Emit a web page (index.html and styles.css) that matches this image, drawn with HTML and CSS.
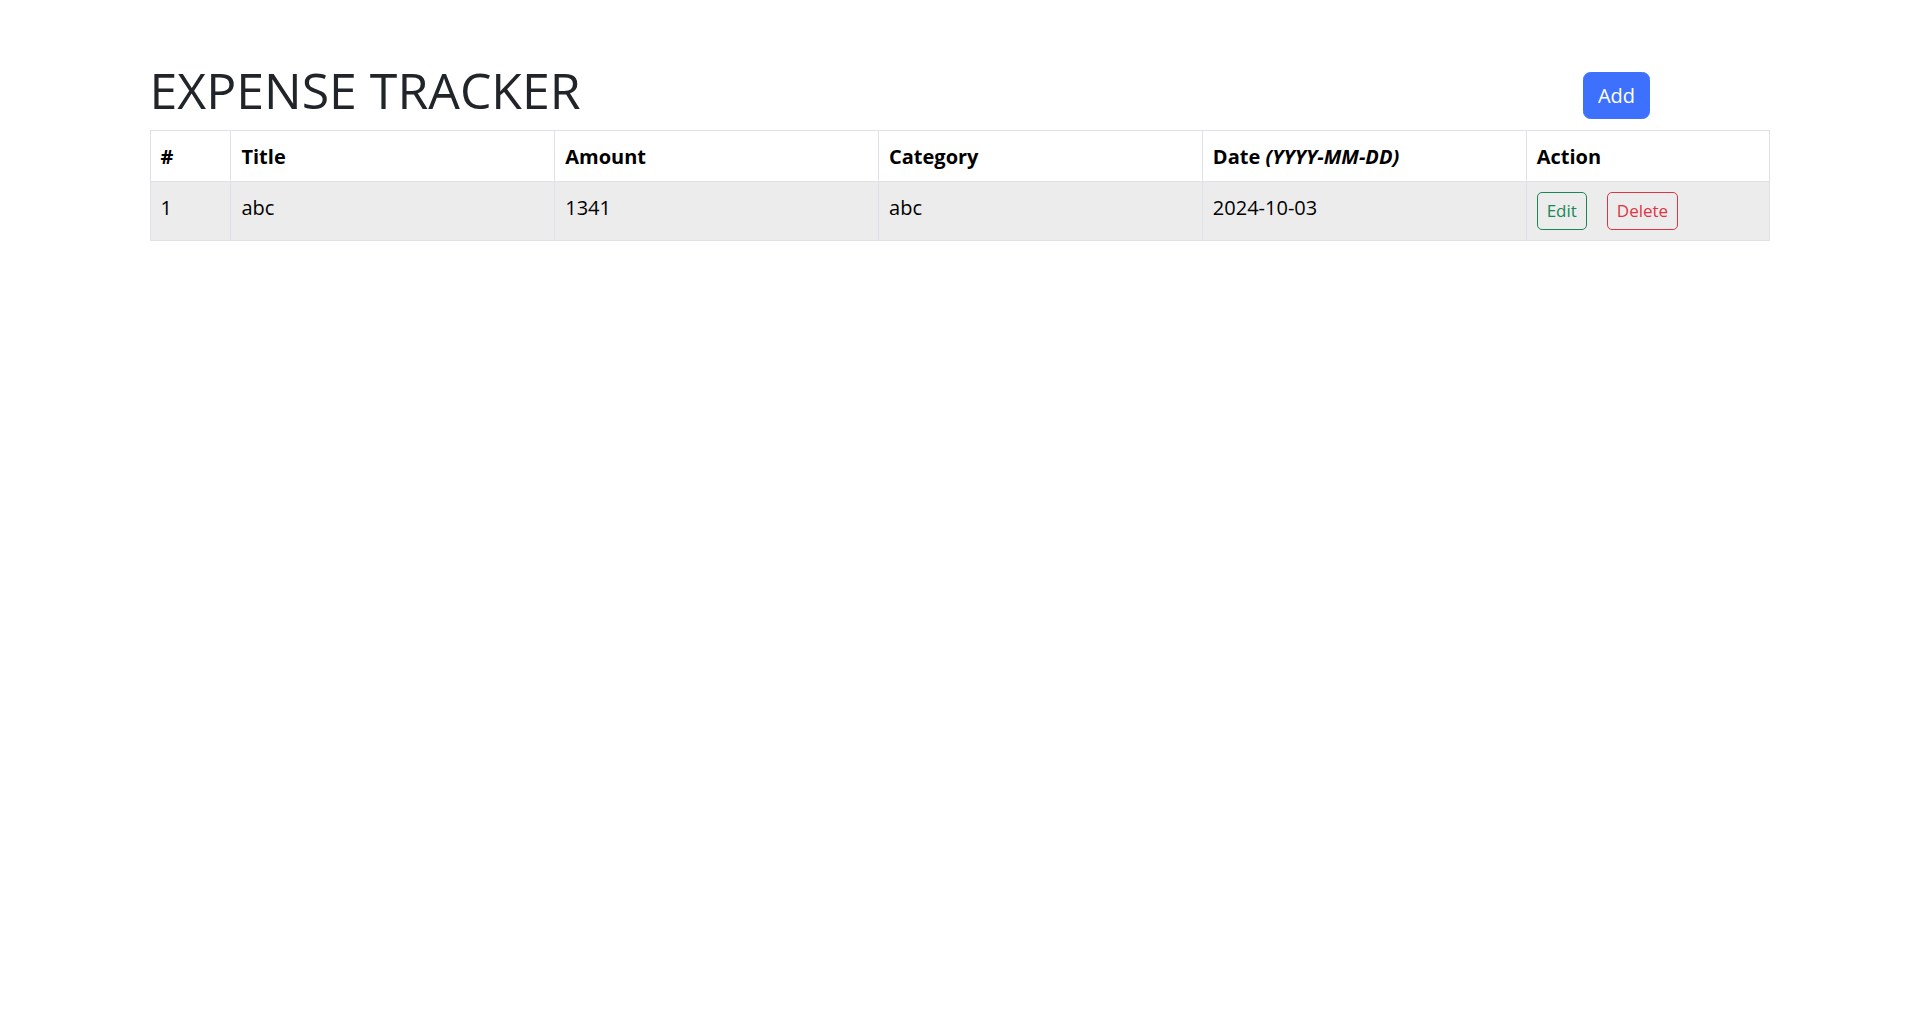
FILE: index.html
```html
<!DOCTYPE html>
<html lang="en">
<head>
<meta charset="utf-8">
<title>Expense Tracker</title>
<link rel="stylesheet" href="styles.css">
</head>
<body>
<div class="container">
  <div class="header">
    <h1 class="title">EXPENSE TRACKER</h1>
    <button class="btn btn-primary">Add</button>
  </div>
  <table class="table">
    <colgroup>
      <col class="c-num">
      <col class="c-wide">
      <col class="c-wide">
      <col class="c-wide">
      <col class="c-wide">
      <col class="c-action">
    </colgroup>
    <thead>
      <tr>
        <th>#</th>
        <th>Title</th>
        <th>Amount</th>
        <th>Category</th>
        <th>Date <i>(YYYY-MM-DD)</i></th>
        <th>Action</th>
      </tr>
    </thead>
    <tbody>
      <tr class="striped">
        <td>1</td>
        <td>abc</td>
        <td>1341</td>
        <td>abc</td>
        <td>2024-10-03</td>
        <td class="action-cell">
          <div class="actions">
            <button class="btn-sm btn-outline-success">Edit</button>
            <button class="btn-sm btn-outline-danger">Delete</button>
          </div>
        </td>
      </tr>
    </tbody>
  </table>
</div>
</body>
</html>
```

FILE: styles.css
```css
* {
  box-sizing: border-box;
}

html, body {
  margin: 0;
  padding: 0;
  background: #ffffff;
}

body {
  font-family: "Open Sans", "Noto Sans", "Liberation Sans", sans-serif;
  font-size: 20px;
  line-height: 30px;
  color: #212529;
}

.container {
  width: 1620px;
  margin: 0 auto;
  padding-top: 60px;
}

.header {
  display: flex;
  justify-content: space-between;
  align-items: flex-end;
  margin-bottom: 10px;
}

.title {
  margin: 0;
  font-size: 50px;
  line-height: 60px;
  font-weight: 500;
  color: #212529;
}

.btn {
  font-family: inherit;
  font-size: 20px;
  line-height: 30px;
  padding: 7.5px 14px;
  border: 1px solid transparent;
  border-radius: 7.5px;
  margin-right: 119.5px;
  margin-bottom: 1px;
  cursor: pointer;
}

.btn-primary {
  background: #3d71fd;
  border-color: #3d71fd;
  color: #ffffff;
}

.table {
  width: 100%;
  border-collapse: collapse;
  table-layout: fixed;
  color: #000000;
}

.c-num { width: 5%; }
.c-wide { width: 20%; }
.c-action { width: 15%; }

.table th,
.table td {
  border: 1px solid #dee2e6;
  padding: 11px 10px 9px;
  text-align: left;
  vertical-align: top;
  line-height: 30px;
}

.table td.action-cell {
  padding: 10px;
}

.table th {
  font-weight: 700;
}

.striped td {
  background: #ececec;
}

.actions {
  display: flex;
  gap: 20px;
  align-items: flex-start;
}

.btn-sm {
  font-family: inherit;
  font-size: 17px;
  line-height: 26px;
  padding: 5px 9px;
  border: 1px solid;
  border-radius: 5px;
  background: transparent;
  cursor: pointer;
}

.btn-outline-success {
  color: #198754;
  border-color: #198754;
}

.btn-outline-danger {
  color: #dc3545;
  border-color: #dc3545;
}
```
